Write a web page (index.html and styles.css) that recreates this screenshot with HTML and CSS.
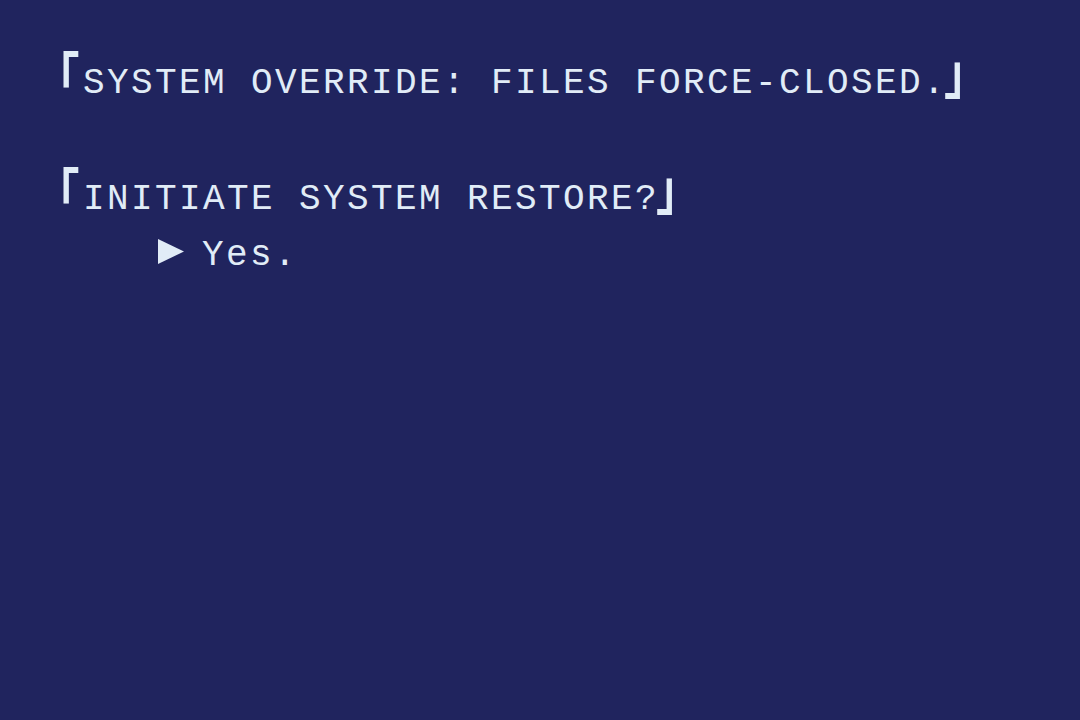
FILE: index.html
```html
<!DOCTYPE html>
<html lang="en">
<head>
<meta charset="utf-8">
<title>System Override</title>
<link rel="stylesheet" href="styles.css">
</head>
<body>
<main class="screen">
  <p class="line line-first"><span class="br br-open">「</span>SYSTEM OVERRIDE: FILES FORCE-CLOSED.<span class="br br-close">」</span></p>
  <p class="line line-second"><span class="br br-open">「</span>INITIATE SYSTEM RESTORE?<span class="br br-close">」</span></p>
  <p class="line choice"><svg class="cursor" width="26" height="25" viewBox="0 0 26 25"><polygon points="0,0 26,12.5 0,25" fill="#e1ecf7"/></svg><span class="choice-text">Yes.</span></p>
</main>
</body>
</html>
```
FILE: styles.css
```css
html, body {
  margin: 0;
  padding: 0;
  height: 100%;
  background: #20245e;
}
.screen {
  padding: 56px 0 0 63px;
  color: #e1ecf7;
  font-family: "Liberation Mono", "Courier New", monospace;
  font-size: 36px;
  letter-spacing: 2.4px;
  line-height: 56px;
}
.line {
  margin: 0;
  white-space: pre;
}
.line-second {
  margin-top: 60px;
}
.br {
  display: inline-block;
  height: 0;
  line-height: 0;
  font-family: "Noto Sans CJK JP", sans-serif;
  font-weight: 700;
  font-size: 56px;
  letter-spacing: 0;
  transform: scaleX(0.79);
  transform-origin: 0 0;
}
.br-open {
  width: 20px;
  text-indent: -35px;
  vertical-align: -6px;
}
.br-close {
  width: 20px;
  margin-left: -3px;
  vertical-align: 0;
}
.cursor {
  vertical-align: 1px;
  margin-left: 95px;
  margin-right: 18px;
}
```
